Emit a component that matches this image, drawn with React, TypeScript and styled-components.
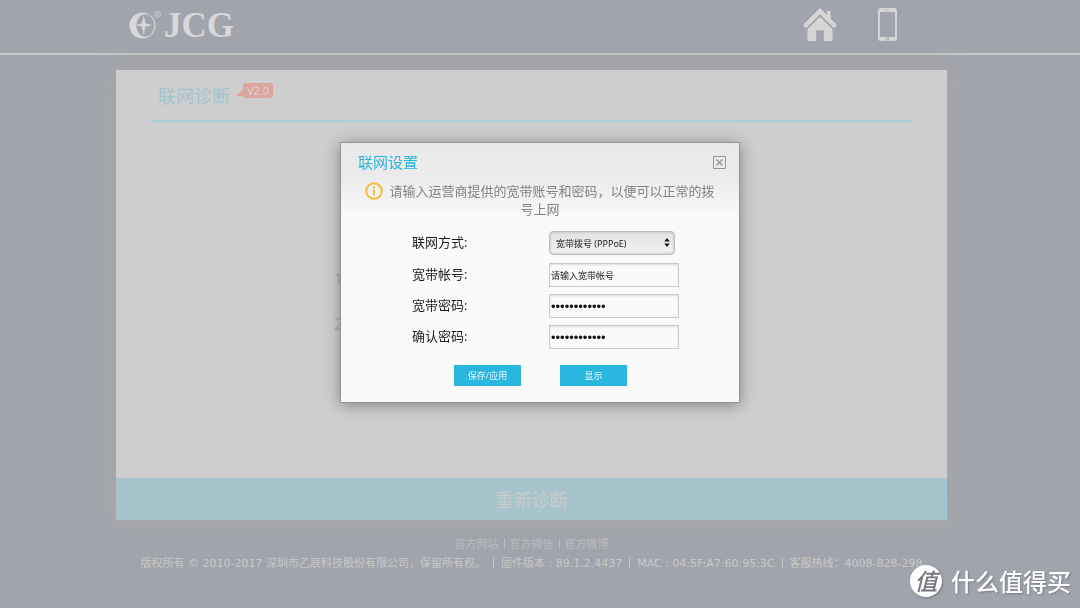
import React from "react";
import styled, { createGlobalStyle } from "styled-components";

const GlobalStyle = createGlobalStyle`
  * { box-sizing: border-box; }
  body {
    margin: 0;
    background: #a1a4ad;
    font-family: "Open Sans", "Noto Sans CJK SC", sans-serif;
  }
`;

const Page = styled.div`
  min-height: 100vh;
  overflow: hidden;
`;

const Header = styled.header`
  display: flex;
  align-items: flex-start;
  justify-content: space-between;
  height: 55px;
  padding: 8px 183px 0 129px;
  border-bottom: 2px solid #c8c8c8;
`;

const Logo = styled.a`
  display: flex;
  color: #d8d8d8;
  text-decoration: none;
`;

const LogoName = styled.span`
  padding-left: 2px;
  font: bold 35px/36px "Liberation Serif", serif;
`;

const Nav = styled.nav`
  display: flex;
  gap: 41px;
`;

const NavLink = styled.a`
  display: block;
  height: 34px;
`;

const Main = styled.main`
  margin: 15px 133px 0 116px;
  background: #cecece;
  box-shadow: 0 0 20px 5px #a9a7a7;
`;

const PanelBody = styled.section`
  min-height: 408px;
  padding: 0 34px;
`;

const PanelHead = styled.div`
  display: flex;
  align-items: flex-start;
  gap: 6px;
  height: 52px;
  padding: 13px 8px 0;
  border-bottom: 2px solid #afcdd6;
`;

const PanelTitle = styled.h1`
  margin: 0;
  font-size: 18px;
  line-height: 26px;
  font-weight: 400;
  color: #a1c5d0;
`;

const Version = styled.span`
  display: flex;
  align-items: flex-end;
  height: 15px;

  &::before {
    content: "";
    border-left: 7px solid transparent;
    border-bottom: 7px solid #dba69f;
    margin-bottom: 2px;
  }
`;

const VersionText = styled.span`
  padding: 0 4px;
  border-radius: 2px;
  background: #dba69f;
  color: #e2d3d1;
  font-size: 11px;
  line-height: 15px;
`;

const Steps = styled.div`
  display: grid;
  gap: 19px;
  padding: 144px 184px 0;
  color: #a4a4a4;
  font-size: 16px;
  line-height: 26px;
`;

const Retry = styled.button`
  display: block;
  width: 100%;
  height: 42px;
  padding: 0;
  border: 0;
  background: #a7c3cc;
  color: #c9cccd;
  font: 400 18px/40px "Noto Sans CJK SC", sans-serif;
`;

const Footer = styled.footer`
  padding: 15px 17px 0 0;
  font: 11px/19px "DejaVu Sans", "Noto Sans CJK SC", sans-serif;
  text-align: center;
  white-space: nowrap;
`;

const FooterLine = styled.div<{ $dim?: boolean }>`
  color: ${(p) => (p.$dim ? "#bbbbbc" : "#c8c8c7")};
`;

const FooterLink = styled.a`
  color: inherit;
  text-decoration: none;
`;

const Bar = styled.span<{ $gap: number }>`
  display: inline-block;
  width: 1px;
  height: 10px;
  margin: 0 ${(p) => p.$gap}px;
  background: currentColor;
  vertical-align: -1px;
`;

const Overlay = styled.div`
  position: fixed;
  inset: 0;
  display: flex;
  align-items: flex-start;
  justify-content: center;
  padding-top: 142px;
`;

const Dialog = styled.div`
  width: 400px;
  padding: 8px 13px 16px 17px;
  border: 1px solid #949494;
  background: linear-gradient(#e9e9e9 0, #ececec 38px, #f9fafa 74px, #fafafa 100%);
  box-shadow: 0 2px 14px #808282;
`;

const DialogHead = styled.div`
  display: flex;
  align-items: center;
  justify-content: space-between;
  height: 22px;
`;

const DialogTitle = styled.h2`
  margin: 0;
  color: #29b6dd;
  font-size: 15px;
  line-height: 22px;
  font-weight: 400;
`;

const Close = styled.button`
  display: block;
  width: 13px;
  height: 13px;
  padding: 0;
  border: 0;
  background: none;
`;

const Hint = styled.p`
  margin: 0;
  padding: 9px 4px 0 0;
  color: #828282;
  font-size: 13px;
  line-height: 18px;
  text-align: center;
`;

const InfoIcon = styled.svg`
  margin-right: 6px;
  vertical-align: top;
`;

const Form = styled.form`
  display: grid;
  grid-template-columns: 137px 130px;
  gap: 7px 0;
  padding: 13px 0 0 54px;
`;

const Label = styled.label`
  color: #1c1c1c;
  font-size: 13px;
  line-height: 22px;
`;

const Input = styled.input`
  width: 130px;
  height: 24px;
  padding: 0 1px;
  border: 1px solid #cbcbcb;
  box-shadow: inset 0 1px 2px #dcdcdc;
  background: #fafafa;
  color: #222;
  font: 9px "Open Sans", "Noto Sans CJK SC", sans-serif;

  &[type="password"] {
    color: #111;
    font: 13px "Liberation Sans", sans-serif;
  }
`;

const SelectBox = styled.div`
  position: relative;
  width: 126px;
  height: 25px;
`;

const Select = styled.select`
  display: block;
  appearance: none;
  width: 100%;
  height: 24px;
  padding: 0 6px;
  border: 1px solid #bcbcbc;
  border-radius: 4px;
  background: linear-gradient(#e3e3e3, #f2f2f2);
  box-shadow: inset 0 0 3px #b5b5b5;
  color: #222;
  font: 9px "Noto Sans", "Noto Sans CJK SC", sans-serif;
`;

const Arrows = styled.svg`
  position: absolute;
  top: 7px;
  right: 5px;
  pointer-events: none;
`;

const Actions = styled.div`
  display: flex;
  grid-column: 1 / -1;
  gap: 39px;
  padding: 9px 0 0 42px;
`;

const Action = styled.button`
  width: 67px;
  height: 21px;
  padding: 0;
  border: 0;
  background: #29b6df;
  color: #e8f8fd;
  font: 9px/21px "Open Sans", "Noto Sans CJK SC", sans-serif;
`;

const Watermark = styled.div`
  position: fixed;
  right: 9px;
  bottom: 10px;
  display: flex;
  align-items: center;
  gap: 9px;
  color: #fff;
  font: 500 24px/34px "Noto Sans CJK SC", sans-serif;
  text-shadow: 1px 1px 2px #777a82;
`;

const Seal = styled.span`
  width: 32px;
  height: 32px;
  border-radius: 50%;
  background: #fff;
  box-shadow: 1px 1px 2px #777a82;
  color: #74777e;
  font-size: 23px;
  font-style: italic;
  line-height: 31px;
  text-align: center;
  text-shadow: none;
`;

const LogoMark = () => (
  <svg width="33" height="34" viewBox="0 0 33 34" aria-hidden="true">
    <circle cx="13.500" cy="17.500" r="13" fill="#d8d8d8" />
    <ellipse cx="16.300" cy="17.500" rx="9" ry="11.200" fill="#a1a4ad" />
    <path d="M14.700 7l1.700 8.200 6.600 1.800-6.600 1.800-1.700 8.500-1.700-8.500L6.500 17l6.500-1.800z" fill="#d8d8d8" />
    <circle cx="28.500" cy="6.500" r="3.200" fill="none" stroke="#c6c7ca" />
    <path d="M27.500 8.300V4.800h1.200a.9.900 0 010 1.800h-1.200m1.200 0l.9 1.700" fill="none" stroke="#c6c7ca" strokeWidth=".8" />
  </svg>
);

const fields = [
  { id: "account", label: "宽带帐号:", type: "text", value: "请输入宽带帐号" },
  { id: "password", label: "宽带密码:", type: "password", value: "123456789012" },
  { id: "confirm", label: "确认密码:", type: "password", value: "123456789012" },
];

const facts = ["固件版本 : 89.1.2.4437", "MAC : 04:5F:A7:60:95:3C", "客服热线：4008-828-298"];

export default function App() {
  return (
    <Page lang="zh-CN">
      <GlobalStyle />
      <Header>
        <Logo href="#">
          <LogoMark />
          <LogoName>JCG</LogoName>
        </Logo>
        <Nav>
          <NavLink href="#" aria-label="首页">
            <svg width="34" height="34" viewBox="0 0 34 34" fill="#d6d6d6">
              <path d="M17 0l7 7V3h3.600v7.600L34 17l-3 3.200L17 6.300 3 20.200 0 17z" />
              <path d="M17 8.800l12.500 12.400V33h-8.700V22.300h-7.600V33H4.500V21.200z" />
            </svg>
          </NavLink>
          <NavLink href="#" aria-label="手机">
            <svg width="19" height="34" viewBox="0 0 19 34">
              <path fillRule="evenodd" fill="#d6d6d6" d="M3 0h13a3 3 0 013 3v27a3 3 0 01-3 3H3a3 3 0 01-3-3V3a3 3 0 013-3zM2 4v25h15V4z" />
              <path d="M7 2h5" stroke="#b9babd" />
              <circle cx="9.500" cy="31" r="1.300" fill="none" stroke="#aaabb0" />
            </svg>
          </NavLink>
        </Nav>
      </Header>
      <Main>
        <PanelBody>
          <PanelHead>
            <PanelTitle>联网诊断</PanelTitle>
            <Version><VersionText>V2.0</VersionText></Version>
          </PanelHead>
          <Steps>
            <span>1</span>
            <span>2</span>
          </Steps>
        </PanelBody>
        <Retry type="button">重新诊断</Retry>
      </Main>
      <Footer>
        <FooterLine $dim>
          <FooterLink href="#">官方网站</FooterLink>
          <Bar $gap={5} />
          <FooterLink href="#">官方微信</FooterLink>
          <Bar $gap={5} />
          <FooterLink href="#">官方微博</FooterLink>
        </FooterLine>
        <FooterLine>
          版权所有 © 2010-2017 深圳市乙辰科技股份有限公司，保留所有权。
          {facts.map((fact) => (
            <React.Fragment key={fact}>
              <Bar $gap={7} />
              {fact}
            </React.Fragment>
          ))}
        </FooterLine>
      </Footer>
      <Overlay>
        <Dialog role="dialog" aria-labelledby="dialog-title">
          <DialogHead>
            <DialogTitle id="dialog-title">联网设置</DialogTitle>
            <Close type="button" aria-label="关闭">
              <svg width="13" height="13" viewBox="0 0 13 13" fill="none" stroke="#969696" display="block">
                <path d="M.5.5h12v12H.5z" />
                <path d="M3.500 3.500l6 6m0-6l-6 6" strokeWidth="1.400" />
              </svg>
            </Close>
          </DialogHead>
          <Hint>
            <InfoIcon width="18" height="18" viewBox="0 0 18 18" fill="none" stroke="#f3bd40" strokeWidth="2">
              <circle cx="9" cy="9" r="7.800" />
              <path d="M9 4.300v2M9 7.500v6" />
            </InfoIcon>
            请输入运营商提供的宽带账号和密码，以便可以正常的拨
            <br />
            号上网
          </Hint>
          <Form>
            <Label htmlFor="mode">联网方式:</Label>
            <SelectBox>
              <Select id="mode">
                <option>宽带拨号 (PPPoE)</option>
              </Select>
              <Arrows width="6" height="9" viewBox="0 0 6 9" fill="#111">
                <path d="M3 0l2.700 3.600H.3zM3 9L.3 5.400h5.400z" />
              </Arrows>
            </SelectBox>
            {fields.map((f) => (
              <React.Fragment key={f.id}>
                <Label htmlFor={f.id}>{f.label}</Label>
                <Input id={f.id} type={f.type} defaultValue={f.value} />
              </React.Fragment>
            ))}
            <Actions>
              <Action type="button">保存/应用</Action>
              <Action type="button">显示</Action>
            </Actions>
          </Form>
        </Dialog>
      </Overlay>
      <Watermark>
        <Seal>值</Seal>
        <span>什么值得买</span>
      </Watermark>
    </Page>
  );
}
